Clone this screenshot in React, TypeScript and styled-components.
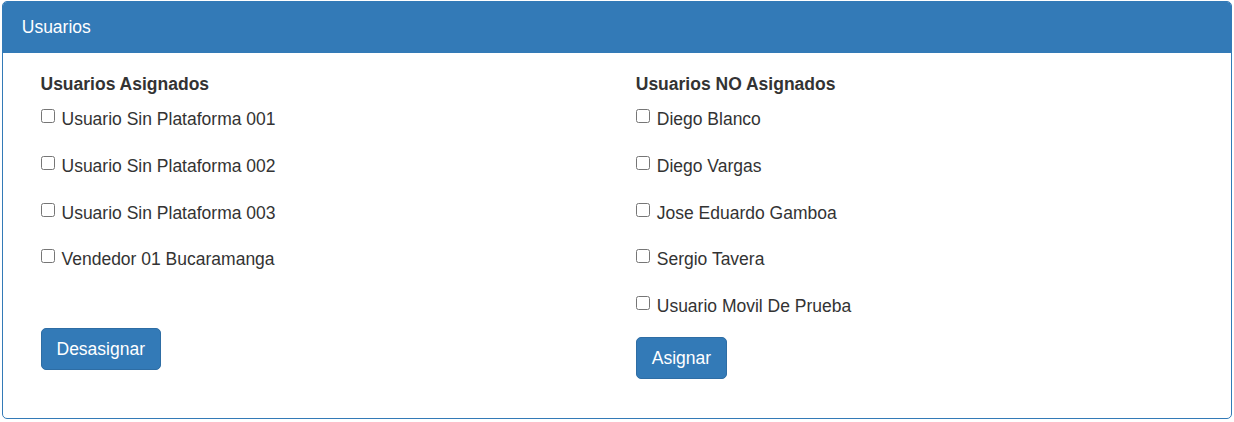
import React from "react";
import styled, { createGlobalStyle } from "styled-components";

const GlobalStyle = createGlobalStyle`
    body {
        margin: 0;
        background: #fff;
        font-family: "Liberation Sans", Arial, sans-serif;
        color: #333;
    }
`;

const Panel = styled.div`
    margin: 1px 2px 0;
    border: 1.25px solid #337ab7;
    border-radius: 5px;
    background: #fff;
    overflow: hidden;
`;

const PanelHeading = styled.div`
    background-color: #337ab7;
    border-bottom: 1.25px solid #337ab7;
    color: #fff;
    padding: 12.5px 18.75px;
    font-size: 17.5px;
    line-height: 25px;
`;

const PanelBody = styled.div`
    padding: 18.75px;
    display: grid;
    grid-template-columns: 1fr 1fr;
`;

const Column = styled.div`
    display: flex;
    flex-direction: column;
    align-items: flex-start;
    padding: 0 18.75px 19.75px;
`;

const ColumnTitle = styled.div`
    font-weight: 700;
    font-size: 17.5px;
    line-height: 25px;
`;

const List = styled.div`
    display: flex;
    flex-direction: column;
    gap: 21.9px;
    margin-top: 10px;
`;

const CheckRow = styled.label`
    display: flex;
    align-items: flex-start;
    font-size: 17.5px;
    line-height: 25px;
    cursor: pointer;
`;

const Check = styled.input`
    -webkit-appearance: none;
    appearance: none;
    box-sizing: border-box;
    width: 14px;
    height: 14px;
    margin: 2px 7px 0 0;
    border: 1px solid #767676;
    border-radius: 2.5px;
    background: #fff;
    flex-shrink: 0;

    &:checked {
        background: #0075ff;
        border-color: #0075ff;
    }
`;

const Button = styled.button<{ $top: number }>`
    margin-top: ${(p) => p.$top}px;
    background-color: #337ab7;
    border: 1.25px solid #2e6da4;
    border-radius: 5px;
    color: #fff;
    font-family: inherit;
    font-size: 17.5px;
    line-height: 25px;
    padding: 7.5px 15px;
    cursor: pointer;
`;

const asignados = [
    "Usuario Sin Plataforma 001",
    "Usuario Sin Plataforma 002",
    "Usuario Sin Plataforma 003",
    "Vendedor 01 Bucaramanga",
];

const noAsignados = [
    "Diego Blanco",
    "Diego Vargas",
    "Jose Eduardo Gamboa",
    "Sergio Tavera",
    "Usuario Movil De Prueba",
];

const UserList: React.FC<{ items: string[] }> = ({ items }) => (
    <List>
        {items.map((name) => (
            <CheckRow key={name}>
                <Check type="checkbox" />
                {name}
            </CheckRow>
        ))}
    </List>
);

export default function App() {
    return (
        <>
            <GlobalStyle />
            <Panel>
                <PanelHeading>Usuarios</PanelHeading>
                <PanelBody>
                    <Column>
                        <ColumnTitle>Usuarios Asignados</ColumnTitle>
                        <UserList items={asignados} />
                        <Button $top={56}>Desasignar</Button>
                    </Column>
                    <Column>
                        <ColumnTitle>Usuarios NO Asignados</ColumnTitle>
                        <UserList items={noAsignados} />
                        <Button $top={18}>Asignar</Button>
                    </Column>
                </PanelBody>
            </Panel>
        </>
    );
}
